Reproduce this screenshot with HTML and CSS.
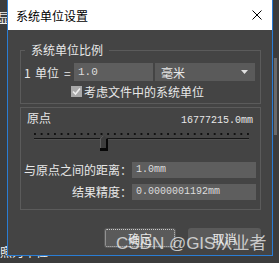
FILE: index.html
```html
<!DOCTYPE html>
<html lang="zh-CN">
<head>
    <meta charset="UTF-8">
    <meta name="viewport" content="width=device-width, initial-scale=1.0">
    <title>系统单位设置</title>
    <link rel="stylesheet" href="styles.css">
</head>
<body>
    <div class="desk">
        <div class="under-top">显</div>
        <div class="under-bottom">照为单位</div>
        <div class="scrollbar"></div>

        <div class="dialog">
            <div class="titlebar">
                <span>系统单位设置</span>
                <svg class="close" width="10" height="10" viewBox="0 0 10 10">
                    <path d="M0.5 0.5 L9.5 9.5 M9.5 0.5 L0.5 9.5" stroke="#000" stroke-width="1" fill="none"/>
                </svg>
            </div>

            <div class="content">
                <fieldset class="group group-scale">
                    <legend>系统单位比例</legend>
                    <div class="unit-row">
                        <span class="num">1</span>
                        <span class="unit-label">单位</span>
                        <span class="eq">=</span>
                        <div class="field field-scale">1.0</div>
                        <div class="select">
                            <span>毫米</span>
                            <svg width="7" height="4" viewBox="0 0 7 4">
                                <path d="M0 0 H7 L3.5 4 Z" fill="#e0e0e0"/>
                            </svg>
                        </div>
                    </div>
                    <div class="check-row">
                        <svg class="check" width="11" height="11" viewBox="0 0 11 11">
                            <rect width="11" height="11" fill="#a9a9a9"/>
                            <path d="M2 5.5 L4.5 8 L9 2.5" stroke="#eeeeee" stroke-width="1.6" fill="none"/>
                        </svg>
                        <span>考虑文件中的系统单位</span>
                    </div>
                </fieldset>

                <fieldset class="group group-origin">
                    <div class="origin-head">
                        <span>原点</span>
                        <span class="mono">16777215.0mm</span>
                    </div>
                    <div class="slider">
                        <div class="dots"></div>
                        <div class="track"></div>
                        <svg class="thumb" width="8" height="16" viewBox="0 0 8 16">
                            <path d="M0 3.5 L3.5 0 L7 3.5 V13 H0 Z" fill="#3d3d3d"/>
                            <path d="M0.5 13 V3.7 L3.5 0.7" stroke="#5e5e5e" stroke-width="1" fill="none"/>
                            <path d="M6 4 H8 V16 H0 V13 H6 Z" fill="#080808"/>
                        </svg>
                    </div>
                    <div class="field-row row-distance">
                        <label>与原点之间的距离：</label>
                        <div class="field">1.0mm</div>
                    </div>
                    <div class="field-row row-precision">
                        <label>结果精度：</label>
                        <div class="field">0.0000001192mm</div>
                    </div>
                </fieldset>

                <div class="buttons">
                    <button class="btn btn-ok"><span>确定</span></button>
                    <button class="btn btn-cancel">取消</button>
                </div>
            </div>

            <div class="watermark">CSDN @GIS从业者</div>
        </div>
    </div>
</body>
</html>
```

FILE: styles.css
```css
body {
    margin: 0;
    background-color: #3c3c3c;
    font-family: "Noto Sans CJK SC", sans-serif;
    font-size: 12px;
    color: #e8e8e8;
}
.desk {
    position: relative;
    width: 279px;
    height: 263px;
    overflow: hidden;
    display: flex;
    flex-direction: column;
}
.under-top {
    padding-top: 9px;
    margin-left: -3px;
    font-size: 14px;
    line-height: 16px;
    color: #f0f0f0;
}
.under-bottom {
    margin-top: auto;
    padding-bottom: 3px;
    line-height: 16px;
    color: #f0f0f0;
}
.scrollbar {
    position: absolute;
    right: 2px;
    top: 58px;
    width: 3px;
    height: 77px;
    background-color: #6a6a6a;
}
.dialog {
    position: absolute;
    left: 7px;
    top: 0;
    width: 264px;
    height: 255px;
    background-color: #444444;
    border: 1px solid #2a7dd4;
    border-top: none;
}
.titlebar {
    height: 30px;
    background-color: #fff;
    color: #000;
    display: flex;
    align-items: center;
    justify-content: space-between;
    padding: 0 10px 0 8px;
}
.content {
    padding: 12px 11px 0 12px;
}
.group {
    margin: 0;
    padding: 0 0 6px 0;
    border: 1px solid #5b5b5b;
    min-width: 0;
}
.group legend {
    margin-left: 4px;
    padding: 0 6px;
    line-height: 16px;
}
.unit-row {
    display: flex;
    align-items: center;
    height: 18px;
    margin-top: 5px;
    padding-left: 3px;
}
.num {
    width: 11px;
}
.unit-label {
    width: 29px;
}
.eq {
    width: 10px;
}
.field {
    box-sizing: border-box;
    height: 16px;
    line-height: 16px;
    padding-left: 4px;
    background-color: #5e5e5e;
    color: #dcdcdc;
    font-family: "Liberation Mono", monospace;
    font-size: 10px;
}
.field-scale {
    width: 79px;
    height: 18px;
    line-height: 18px;
    font-size: 11px;
}
.select {
    box-sizing: border-box;
    width: 100px;
    height: 18px;
    margin-left: 2px;
    padding: 0 7px 0 6px;
    background-color: #5a5a5a;
    display: flex;
    align-items: center;
    justify-content: space-between;
}
.check-row {
    display: flex;
    align-items: center;
    gap: 2px;
    height: 11px;
    margin-top: 5px;
    padding-left: 50px;
}
.group-origin {
    margin-top: 3px;
    padding: 2px 0 9px 0;
}
.origin-head {
    display: flex;
    justify-content: space-between;
    align-items: baseline;
    height: 16px;
    line-height: 16px;
    padding: 0 7px 0 6px;
}
.mono {
    font-family: "Liberation Mono", monospace;
    font-size: 10px;
}
.slider {
    position: relative;
    height: 18px;
    margin: 4px 11px 0 13px;
}
.dots {
    margin-top: 7px;
    height: 2px;
    background-image: linear-gradient(to right, #111 2px, transparent 2px);
    background-size: 6.67px 2px;
}
.track {
    margin-top: 3px;
    height: 1px;
    background-color: #161616;
    border-bottom: 1px solid #505050;
}
.thumb {
    position: absolute;
    left: 66px;
    top: 2px;
}
.field-row {
    display: grid;
    grid-template-columns: 111px 124px;
    align-items: center;
    height: 16px;
}
.field-row label {
    text-align: right;
    line-height: 16px;
}
.row-distance {
    margin-top: 11px;
}
.row-precision {
    margin-top: 6px;
}
.buttons {
    display: flex;
    justify-content: flex-end;
    gap: 12px;
    margin-top: 18px;
}
.btn {
    height: 20px;
    padding: 0;
    border: none;
    border-radius: 3px;
    background-color: #5a5a5a;
    color: #e8e8e8;
    font-family: "Noto Sans CJK SC", sans-serif;
    font-size: 12px;
}
.btn-ok {
    width: 72px;
    outline: 1px dotted #c8c8c8;
    outline-offset: -2px;
}
.btn-cancel {
    width: 73px;
}
.watermark {
    position: absolute;
    left: 108px;
    top: 234px;
    line-height: 20px;
    font-family: "Liberation Sans", "Noto Sans CJK SC", sans-serif;
    font-size: 17px;
    color: rgba(235, 235, 235, 0.8);
    white-space: nowrap;
}
```
